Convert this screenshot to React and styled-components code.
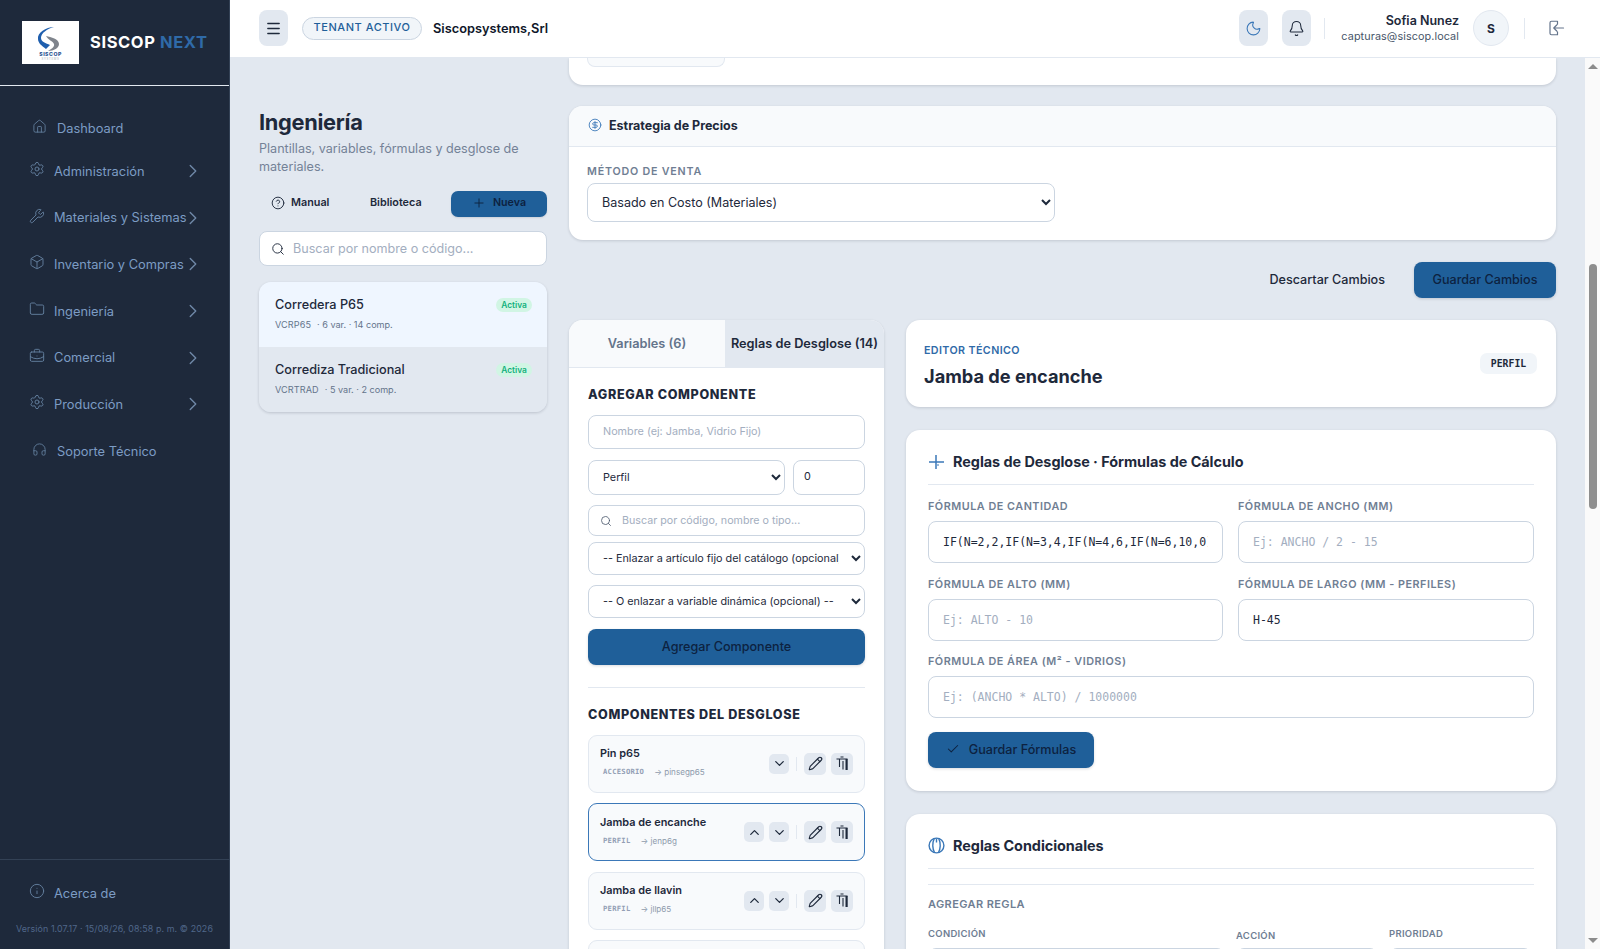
import React from 'react';
import styled, { createGlobalStyle } from 'styled-components';
import { Home, Settings, Wrench, Box, Folder, BriefcaseBusiness, Headphones, Info, ChevronRight, ChevronUp, ChevronDown, Menu, Moon, Bell, CircleHelp, Plus, Search, CircleDollarSign, Check, Pencil } from 'lucide-react';

const Global = createGlobalStyle`
  html, body { margin: 0; height: 100%; overflow: hidden; }
  body { font-family: Inter, "Liberation Sans", sans-serif; color: #1e293b; }
  * { box-sizing: border-box; }
  input::placeholder { color: #a3aec0; opacity: 1; }
`;
const mono = `"DejaVu Sans Mono", "Liberation Mono", monospace`;
const Shell = styled.div`display: flex; height: 100vh; background: #e2e8f0;`;

const Sidebar = styled.aside`
  width: 230px; flex: none; display: flex; flex-direction: column; background: #1e293b; border-right: 1px solid #334155;
`;
const Brand = styled.div`
  height: 86px; display: flex; align-items: flex-start; gap: 11px; padding: 21px 0 0 22px; border-bottom: 1px solid #e2e8f0;
`;
const LogoBox = styled.div`width: 57px; height: 43px; background: #fff; display: flex;`;
const BrandName = styled.div`
  font-size: 16.5px; font-weight: 700; letter-spacing: .6px; color: #fff; margin-top: 11px; white-space: nowrap;
  span { color: #2f6aa8; }
`;
const Nav = styled.nav`flex: 1; padding-top: 22px; display: flex; flex-direction: column;`;
const NavRow = styled.div`
  height: ${p => p.$plain ? (p.$h || 40) : 46.6}px; flex: none; display: flex; align-items: center;
  padding-left: ${p => p.$plain ? 32 : 29}px; padding-right: 25px; gap: ${p => p.$plain ? 10 : 9}px;
  font-size: 12.85px; color: #7c9cc4; white-space: nowrap;
  > svg:first-child { color: #64809f; margin-bottom: 4px; flex: none; }
  > span { flex: 1; }
`;
const NavChevron = styled(ChevronRight)`color: #7088a8; flex: none; margin-left: -20px;`;
const SideFoot = styled.div`height: 90px; border-top: 1px solid #334155; padding-top: 10px;`;
const Version = styled.div`font-size: 8.9px; color: #50678a; text-align: center; margin-top: 6px; white-space: nowrap; letter-spacing: .1px;`;

const Main = styled.div`flex: 1; min-width: 0; display: flex; flex-direction: column;`;
const TopBar = styled.header`
  height: 58px; flex: none; background: #fff; border-bottom: 1px solid #e2e8f0; display: flex; align-items: center; padding: 0 35px 1px 29px;
`;
const IconButton = styled.button`
  width: 29px; height: 36px; border: 0; border-radius: 8px; background: #e2e8f0; padding: 0; display: flex; align-items: center; justify-content: center; flex: none;
  color: ${p => p.$color || '#1e293b'}; margin-left: ${p => p.$ml || 0}px;
`;
const TenantPill = styled.div`
  margin-left: 14px; height: 23px; width: 120px; border: 1px solid #cbd5e1; background: #f1f5f9; border-radius: 12px; font-size: 11px; letter-spacing: .55px; padding-bottom: 2px;
  color: #1f5f99; display: flex; align-items: center; justify-content: center; font-weight: 500; white-space: nowrap;
`;
const TenantName = styled.div`margin-left: 11px; font-size: 12.8px; font-weight: 600; color: #0f172a; flex: 1;`;
const TopDivider = styled.div`width: 1px; height: 21px; background: #e2e8f0; margin: 0 ${p => p.$r || 0}px 0 ${p => p.$l || 0}px;`;
const UserBlock = styled.div`text-align: right; margin-right: 14px;`;
const UserName = styled.div`font-size: 12.5px; font-weight: 600; color: #1e293b; line-height: 16px;`;
const UserMail = styled.div`font-size: 10.8px; color: #475569; line-height: 15px; letter-spacing: .1px;`;
const Avatar = styled.div`
  width: 36px; height: 36px; border-radius: 50%; background: #f1f5f9; border: 1px solid #e2e8f0; display: flex; align-items: center; justify-content: center; font-size: 12px; font-weight: 700;
`;

const Body = styled.div`flex: 1; min-height: 0; display: flex;`;
const Viewport = styled.div`flex: 1; min-width: 0; overflow: hidden; display: flex; gap: 22px; padding: 0 29px;`;
const Scrollbar = styled.div`width: 15px; flex: none; background: #fafafa; display: flex; flex-direction: column; align-items: center; padding-top: 6px;`;
const ArrowUp = styled.i`width: 0; height: 0; border: 5px solid transparent; border-top: 0; border-bottom: 5px solid #8c8c8c;`;
const ArrowDown = styled.i`width: 0; height: 0; border: 5px solid transparent; border-bottom: 0; border-top: 5px solid #8c8c8c; margin-top: auto; margin-bottom: 6px;`;
const Thumb = styled.div`width: 8px; height: 245px; background: #8e8e8e; border-radius: 4px; margin-top: 195px;`;

const LeftCol = styled.div`width: 288px; flex: none; padding-top: 49px;`;
const PageTitle = styled.h1`margin: 0; font-size: 21.8px; line-height: 30px; font-weight: 700; color: #1e293b; letter-spacing: -.3px;`;
const PageSub = styled.p`margin: 3px 0 0; font-size: 12.6px; line-height: 18px; color: #748297;`;
const ActionRow = styled.div`display: flex; align-items: center; margin-top: 15px; height: 26px; font-size: 10.8px; font-weight: 600; color: #1e293b;`;
const GhostAction = styled.div`display: flex; align-items: center; gap: 6px; width: ${p => p.$w}px; padding-left: ${p => p.$pl}px; padding-bottom: 3px;`;
const NewButton = styled.button`
  margin-left: auto; width: 96px; height: 26px; border: 0; border-radius: 7px; background: #1f5f99; color: #0d2240; font: 600 10.7px Inter, sans-serif; display: flex; align-items: center; justify-content: center; gap: 7px; box-shadow: 0 1px 2px rgba(0,0,0,.1); padding: 0 0 3px;
`;
const SearchBox = styled.div`
  margin-top: 14px; height: 35px; background: #fff; border: 1px solid #cbd5e1; border-radius: 8px; display: flex; align-items: center; gap: 8px; padding-left: 11px; color: #1e293b;
  input { border: 0; outline: 0; flex: 1; min-width: 0; font: 12.6px Inter, sans-serif; background: transparent; padding: 0; }
`;
const ListCard = styled.div`margin-top: 16px; border-radius: 12px; overflow: hidden; box-shadow: 0 1px 3px rgba(15,23,42,.18);`;
const ListItem = styled.div`height: 65px; padding: 15px 15px 0 16px; background: ${p => p.$active ? '#eff6ff' : '#e2e8f0'};`;
const ListTop = styled.div`display: flex; justify-content: space-between; align-items: center; font-size: 12.7px; font-weight: 500; color: #1e293b; line-height: 16px;`;
const ActivePill = styled.span`height: 14px; width: 36px; border-radius: 7px; background: #d1f5e4; color: #12b17c; font-size: 8.4px; font-weight: 600; display: flex; align-items: center; justify-content: center;`;
const ListMeta = styled.div`margin-top: 5px; font-size: 9.1px; color: #64748b; line-height: 13px; span { margin-right: 6px; letter-spacing: .1px; }`;

const RightCol = styled.div`width: 987px; flex: none; display: flex; flex-direction: column;`;
const Card = styled.section`background: #fff; border-radius: 14px; box-shadow: 0 1px 3px rgba(15,23,42,.15);`;
const TailCard = styled(Card)`height: 27px; border-radius: 0 0 14px 14px; flex: none; padding-left: 18px;`;
const TailField = styled.div`width: 138px; height: 9px; background: #f8fafc; border: 1px solid #e2e8f0; border-top: 0; border-radius: 0 0 8px 8px;`;
const PriceCard = styled(Card)`margin-top: 21px; flex: none; overflow: hidden;`;
const PriceHead = styled.div`height: 41px; background: #f8fafc; border-bottom: 1px solid #e2e8f0; display: flex; align-items: center; gap: 7px; padding: 0 19px 2px; font-size: 12.5px; font-weight: 700; color: #1e293b; svg { color: #3b78b8; }`;
const PriceBody = styled.div`padding: 18px 18px 18px;`;
const SmallLabel = styled.div`font-size: 10.7px; font-weight: 600; letter-spacing: .8px; color: #6f7e93; line-height: 13px; margin-bottom: 5px; white-space: nowrap;`;
const NativeSelect = styled.select`
  display: block; width: ${p => p.$w || '100%'}; height: ${p => p.$h || 33}px; border: 1px solid #cbd5e1; border-radius: 8px; background: #fff; color: #1e293b;
  font: ${p => p.$fs || 10.8}px Inter, sans-serif; padding: 0 ${p => p.$pr || 0}px 0 ${p => p.$pl || 10}px; margin-top: ${p => p.$mt || 0}px; outline: 0; min-width: 0;
`;
const SaveRow = styled.div`flex: none; margin-top: 22px; height: 36px; display: flex; align-items: center; justify-content: flex-end; gap: 29px; font-size: 12.6px; font-weight: 500; color: #1e293b;`;
const DiscardText = styled.span`margin-bottom: 2px;`;
const PrimaryButton = styled.button`
  width: ${p => p.$w || '100%'}; height: 36px; border: 0; border-radius: 8px; background: #1f5f99; color: #0d2240; font: 500 12.6px Inter, sans-serif; display: flex; align-items: center; justify-content: center; gap: 9px; box-shadow: 0 1px 3px rgba(15,23,42,.15); flex: none; margin-top: ${p => p.$mt || 0}px; padding: 0 0 1px;
`;
const Columns = styled.div`flex: 1; min-height: 0; margin-top: 22px; display: flex; gap: 22px; align-items: flex-start;`;
const TabCard = styled(Card)`width: 315px; flex: none; overflow: hidden; padding-bottom: 60px;`;
const Tabs = styled.div`height: 48px; display: grid; grid-template-columns: 156px 1fr; border-bottom: 1px solid #e2e8f0; font-size: 12.75px; font-weight: 600;`;
const Tab = styled.div`display: flex; align-items: center; justify-content: center; white-space: nowrap; background: ${p => p.$on ? '#e2e8f0' : '#f8fafc'}; color: ${p => p.$on ? '#1e293b' : '#64748b'};`;
const TabBody = styled.div`padding: 19px 19px 0 19px;`;
const SectionHead = styled.h3`margin: ${p => p.$mt || 0}px 0 0; font-size: 12.6px; line-height: 16px; font-weight: 800; letter-spacing: .65px; color: #1e293b; white-space: nowrap;`;
const TextField = styled.input`
  display: block; width: ${p => p.$w || '100%'}; height: ${p => p.$h || 34}px; border: 1px solid #cbd5e1; border-radius: 8px; padding: 0 0 2px ${p => p.$pl || 14}px; font: 10.8px Inter, sans-serif; color: #1e293b; background: #fff; outline: 0; margin-top: ${p => p.$mt || 0}px;
`;
const TypeRow = styled.div`margin-top: 11px; display: flex; gap: 8px;`;
const CatSearch = styled.div`
  margin-top: 10px; height: 31px; border: 1px solid #cbd5e1; border-radius: 8px; display: flex; align-items: center; gap: 10px; padding-left: 11px; color: #475569;
  input { border: 0; outline: 0; padding: 0; flex: 1; min-width: 0; font: 10.7px Inter, sans-serif; background: transparent; }
`;
const Rule = styled.hr`border: 0; border-top: 1px solid #e2e8f0; margin: ${p => p.$m || '22px 0 0'};`;
const CompItem = styled.div`
  height: 58px; margin-top: 10.5px; border-radius: 9px; background: #f8fafc; border: 1px solid ${p => p.$on ? '#3b78b8' : '#e2e8f0'}; display: flex; align-items: center; padding: 0 11px;
  h3 + & { margin-top: 11.5px; }
`;
const CompText = styled.div`flex: 1; min-width: 0;`;
const CompName = styled.div`font-size: 10.9px; font-weight: 600; color: #1e293b; line-height: 14px; margin-top: -3px;`;
const CompMeta = styled.div`margin-top: 6px; display: flex; align-items: center; padding-left: 3px; font-size: 8.1px; color: #8e9aac; line-height: 12px;`;
const CompType = styled.span`font-family: ${mono}; font-size: 7.2px; font-weight: 700; letter-spacing: .25px; color: #939fb5; margin-right: 10px;`;
const MoveBtn = styled.div`width: 20px; height: 20px; border-radius: 5px; background: #e2e8f0; display: flex; align-items: center; justify-content: center; color: #1e293b; margin-left: ${p => p.$ml || 5}px;`;
const MiniSep = styled.div`width: 1px; height: 14px; background: #e2e8f0; margin: 0 7px;`;
const ToolBtn = styled.div`width: 22px; height: 22px; border-radius: 5px; background: #e2e8f0; display: flex; align-items: center; justify-content: center; color: #1e293b; margin-left: ${p => p.$ml || 0}px;`;

const EditorCol = styled.div`flex: 1; min-width: 0; display: flex; flex-direction: column; gap: 23px;`;
const EditorHead = styled(Card)`height: 87px; flex: none; padding: 23px 19px 0 18px; display: flex; justify-content: space-between; align-items: flex-start;`;
const Eyebrow = styled.div`font-size: 10.7px; font-weight: 600; letter-spacing: .4px; color: #2f6aa8; line-height: 14px; margin-top: 1px;`;
const EditorTitle = styled.div`font-size: 18.2px; font-weight: 700; color: #1e293b; line-height: 24px; margin-top: 6px;`;
const CodePill = styled.div`width: 57px; height: 21px; border-radius: 7px; background: #f1f5f9; font: 600 9.8px ${mono}; color: #1e293b; display: flex; align-items: center; justify-content: center; margin-top: 10px;`;
const RuleCard = styled(Card)`flex: none; padding: 21px 22px ${p => p.$pb || 22}px; height: ${p => p.$ht ? p.$ht + 'px' : 'auto'};`;
const RuleHead = styled.div`display: flex; align-items: center; gap: 8px; height: 22px; font-size: 14.45px; font-weight: 700; color: #1e293b; letter-spacing: -.05px; padding-bottom: 1px;`;
const FormulaGrid = styled.div`display: grid; grid-template-columns: 295px 296px; gap: 0 15px; margin-top: 15px;`;
const FormulaField = styled.div`grid-column: ${p => p.$full ? '1 / -1' : 'auto'}; margin-bottom: ${p => p.$full ? 13.5 : 14.5}px;`;
const FormulaLabel = styled(SmallLabel)`margin-bottom: 7px; font-size: 10.8px; letter-spacing: .52px; line-height: 14px;`;
const CodeInput = styled.input`
  display: block; width: 100%; height: 42px; border: 1px solid #cbd5e1; border-radius: 8px; padding: 0 14px; font: 11.5px ${mono}; color: #1e293b; background: #fff; outline: 0;
`;
const ToolHeading = styled(SmallLabel)`margin: 13px 0 0; font-size: 11px; letter-spacing: .4px;`;
const CondGrid = styled.div`display: grid; grid-template-columns: 297px 142px 143px; gap: 11px; align-items: start; margin-top: 16px;`;
const CondCell = styled.div`margin-top: ${p => p.$mt || 0}px;`;
const CondLabel = styled(SmallLabel)`font-size: 9.5px; letter-spacing: .3px; margin-bottom: ${p => p.$mb}px;`;
const CondInput = styled.div`height: 34px; border: 1px solid #cbd5e1; border-radius: 8px; background: #fff;`;

const LogoMark = () => (
  <svg width="57" height="43" viewBox="0 0 57 43" aria-hidden="true">
    <path d="M32 6 C25 8 19 12 19 17 C19 21 24 22 28 24 L24 28 C20 25 16 22 16 18 C15 12 24 6 32 6Z" fill="#1f5fae" />
    <path d="M24 15 C29 16 37 18 37 23 C37 27 32 30 26 30 C29 28 33 26 32 23 C31 20 26 19 24 15Z" fill="#7f848c" />
    <text x="28.5" y="35" textAnchor="middle" fontFamily="Inter, sans-serif" fontWeight="800" fontSize="5.2" letterSpacing=".5" fill="#1f4f8f">SISCOP</text>
    <text x="28.5" y="39" textAnchor="middle" fontFamily="Inter, sans-serif" fontSize="2.8" letterSpacing=".7" fill="#a7adb6">SYSTEMS</text>
  </svg>
);
const DoorIcon = () => (
  <svg width="18" height="18" viewBox="0 0 24 24" fill="none" stroke="#64748b" strokeWidth="1.6" strokeLinecap="round" strokeLinejoin="round" aria-hidden="true">
    <path d="M14 3H6a2 2 0 0 0-2 2v14a2 2 0 0 0 2 2h8M14 3v4M14 21v-4" />
    <path d="M22 12H9M13 8l-4 4 4 4" />
  </svg>
);
const ClippedTrash = () => (
  <svg width="15" height="15" viewBox="0 0 15 15" fill="none" stroke="currentColor" strokeWidth="1.1" aria-hidden="true">
    <path d="M1.5 3h11M5.5 1h3M4.5 3v8M8 5v8.5" />
    <path d="M11.6 3v11" strokeWidth="2.2" />
  </svg>
);
const CrossIcon = () => (
  <svg width="17" height="16" viewBox="0 0 17 16" fill="none" stroke="#3b78b8" strokeWidth="1.5" aria-hidden="true">
    <path d="M1 8h15M8 1v14" /><path d="M10 10v2" strokeWidth="1" />
  </svg>
);
const RingIcon = () => (
  <svg width="17" height="17" viewBox="0 0 17 17" fill="none" stroke="#3b78b8" strokeWidth="1.4" aria-hidden="true">
    <circle cx="8.5" cy="8.5" r="7.4" />
    <path d="M6.3 1.5C4 6 4.5 12 6.5 15.5M10.7 1.5C13 6 12.5 12 10.5 15.5" />
    <path d="M8.5 1.5v4" />
  </svg>
);

const navItems = [
  [Settings, 'Administración'], [Wrench, 'Materiales y Sistemas'], [Box, 'Inventario y Compras'],
  [Folder, 'Ingeniería'], [BriefcaseBusiness, 'Comercial'], [Settings, 'Producción'],
];
const components = [
  { name: 'Pin p65', type: 'ACCESORIO', code: '→ pinsegp65', up: false },
  { name: 'Jamba de encanche', type: 'PERFIL', code: '→ jenp6g', up: true, on: true },
  { name: 'Jamba de llavin', type: 'PERFIL', code: '→ jllp65', up: true },
];

export default function App() {
  return (
    <Shell>
      <Global />
      <Sidebar>
        <Brand>
          <LogoBox><LogoMark /></LogoBox>
          <BrandName>SISCOP <span>NEXT</span></BrandName>
        </Brand>
        <Nav>
          <NavRow $plain><Home size={15} strokeWidth={1.4} /><span>Dashboard</span></NavRow>
          {navItems.map(([I, t]) => (
            <NavRow key={t}><I size={16} strokeWidth={1.4} /><span>{t}</span><NavChevron size={22} strokeWidth={1.5} /></NavRow>
          ))}
          <NavRow $plain $h={47}><Headphones size={15} strokeWidth={1.4} /><span>Soporte Técnico</span></NavRow>
        </Nav>
        <SideFoot>
          <NavRow><Info size={16} strokeWidth={1.4} /><span>Acerca de</span></NavRow>
          <Version>Versión 1.07.17 · 15/08/26, 08:58 p. m. © 2026</Version>
        </SideFoot>
      </Sidebar>
      <Main>
        <TopBar>
          <IconButton><Menu size={17} strokeWidth={2} /></IconButton>
          <TenantPill>TENANT ACTIVO</TenantPill>
          <TenantName>Siscopsystems,Srl</TenantName>
          <IconButton $color="#3b78b8"><Moon size={17} strokeWidth={1.5} /></IconButton>
          <IconButton $ml={14}><Bell size={17} strokeWidth={1.5} /></IconButton>
          <TopDivider $l={13} $r={16} />
          <UserBlock>
            <UserName>Sofia Nunez</UserName>
            <UserMail>capturas@siscop.local</UserMail>
          </UserBlock>
          <Avatar>S</Avatar>
          <TopDivider $l={15} $r={22} />
          <DoorIcon />
        </TopBar>
        <Body>
          <Viewport>
            <LeftCol>
              <PageTitle>Ingeniería</PageTitle>
              <PageSub>Plantillas, variables, fórmulas y desglose de materiales.</PageSub>
              <ActionRow>
                <GhostAction $w={111} $pl={12}><CircleHelp size={14} strokeWidth={1.6} />Manual</GhostAction>
                <GhostAction $w={60} $pl={0}>Biblioteca</GhostAction>
                <NewButton><Plus size={14} strokeWidth={1.6} />Nueva</NewButton>
              </ActionRow>
              <SearchBox>
                <Search size={14} strokeWidth={1.6} />
                <input placeholder="Buscar por nombre o código..." />
              </SearchBox>
              <ListCard>
                <ListItem $active>
                  <ListTop>Corredera P65<ActivePill>Activa</ActivePill></ListTop>
                  <ListMeta><span>VCRP65</span>· 6 var. · 14 comp.</ListMeta>
                </ListItem>
                <ListItem>
                  <ListTop>Corrediza Tradicional<ActivePill>Activa</ActivePill></ListTop>
                  <ListMeta><span>VCRTRAD</span>· 5 var. · 2 comp.</ListMeta>
                </ListItem>
              </ListCard>
            </LeftCol>
            <RightCol>
              <TailCard><TailField /></TailCard>
              <PriceCard>
                <PriceHead><CircleDollarSign size={14} strokeWidth={1.5} />Estrategia de Precios</PriceHead>
                <PriceBody>
                  <SmallLabel>MÉTODO DE VENTA</SmallLabel>
                  <NativeSelect $w="468px" $h={39} $fs={12.55} $pl={10}><option>Basado en Costo (Materiales)</option></NativeSelect>
                </PriceBody>
              </PriceCard>
              <SaveRow>
                <DiscardText>Descartar Cambios</DiscardText>
                <PrimaryButton $w="142px">Guardar Cambios</PrimaryButton>
              </SaveRow>
              <Columns>
                <TabCard>
                  <Tabs>
                    <Tab>Variables (6)</Tab>
                    <Tab $on>Reglas de Desglose (14)</Tab>
                  </Tabs>
                  <TabBody>
                    <SectionHead>AGREGAR COMPONENTE</SectionHead>
                    <TextField $mt={12} placeholder="Nombre (ej: Jamba, Vidrio Fijo)" />
                    <TypeRow>
                      <NativeSelect $w="197px" $h={35} $pl={10}><option>Perfil</option></NativeSelect>
                      <TextField $w="72px" $h={35} $pl={10} defaultValue="0" />
                    </TypeRow>
                    <CatSearch>
                      <Search size={12} strokeWidth={1.6} />
                      <input placeholder="Buscar por código, nombre o tipo..." />
                    </CatSearch>
                    <NativeSelect $mt={6} $pl={10} $pr={9}><option>-- Enlazar a artículo fijo del catálogo (opcional) --</option></NativeSelect>
                    <NativeSelect $mt={10} $pl={10} $pr={9}><option>-- O enlazar a variable dinámica (opcional) --</option></NativeSelect>
                    <PrimaryButton $mt={11}>Agregar Componente</PrimaryButton>
                    <Rule />
                    <SectionHead $mt={19}>COMPONENTES DEL DESGLOSE</SectionHead>
                    {components.map(c => (
                      <CompItem key={c.name} $on={c.on}>
                        <CompText>
                          <CompName>{c.name}</CompName>
                          <CompMeta><CompType>{c.type}</CompType>{c.code}</CompMeta>
                        </CompText>
                        {c.up && <MoveBtn $ml={1}><ChevronUp size={15} strokeWidth={2} /></MoveBtn>}
                        <MoveBtn><ChevronDown size={15} strokeWidth={2} /></MoveBtn>
                        <MiniSep />
                        <ToolBtn><Pencil size={15} strokeWidth={1.8} /></ToolBtn>
                        <ToolBtn $ml={5}><ClippedTrash /></ToolBtn>
                      </CompItem>
                    ))}
                    <CompItem />
                  </TabBody>
                </TabCard>
                <EditorCol>
                  <EditorHead>
                    <div>
                      <Eyebrow>EDITOR TÉCNICO</Eyebrow>
                      <EditorTitle>Jamba de encanche</EditorTitle>
                    </div>
                    <CodePill>PERFIL</CodePill>
                  </EditorHead>
                  <RuleCard $ht={361}>
                    <RuleHead><CrossIcon />Reglas de Desglose · Fórmulas de Cálculo</RuleHead>
                    <Rule $m="11px 0 0" />
                    <FormulaGrid>
                      <FormulaField>
                        <FormulaLabel>FÓRMULA DE CANTIDAD</FormulaLabel>
                        <CodeInput defaultValue="IF(N=2,2,IF(N=3,4,IF(N=4,6,IF(N=6,10,0))))" />
                      </FormulaField>
                      <FormulaField>
                        <FormulaLabel>FÓRMULA DE ANCHO (MM)</FormulaLabel>
                        <CodeInput placeholder="Ej: ANCHO / 2 - 15" />
                      </FormulaField>
                      <FormulaField>
                        <FormulaLabel>FÓRMULA DE ALTO (MM)</FormulaLabel>
                        <CodeInput placeholder="Ej: ALTO - 10" />
                      </FormulaField>
                      <FormulaField>
                        <FormulaLabel>FÓRMULA DE LARGO (MM - PERFILES)</FormulaLabel>
                        <CodeInput defaultValue="H-45" />
                      </FormulaField>
                      <FormulaField $full>
                        <FormulaLabel>FÓRMULA DE ÁREA (M² - VIDRIOS)</FormulaLabel>
                        <CodeInput placeholder="Ej: (ANCHO * ALTO) / 1000000" />
                      </FormulaField>
                    </FormulaGrid>
                    <PrimaryButton $w="166px"><Check size={14} strokeWidth={1.8} />Guardar Fórmulas</PrimaryButton>
                  </RuleCard>
                  <RuleCard $pb={60}>
                    <RuleHead><RingIcon />Reglas Condicionales</RuleHead>
                    <Rule $m="11px 0 0" />
                    <Rule $m="15px 0 0" />
                    <ToolHeading>AGREGAR REGLA</ToolHeading>
                    <CondGrid>
                      <CondCell><CondLabel $mb={8}>CONDICIÓN</CondLabel><CondInput /></CondCell>
                      <CondCell $mt={2}><CondLabel $mb={6}>ACCIÓN</CondLabel><CondInput /></CondCell>
                      <CondCell><CondLabel $mb={8}>PRIORIDAD</CondLabel><CondInput /></CondCell>
                    </CondGrid>
                  </RuleCard>
                </EditorCol>
              </Columns>
            </RightCol>
          </Viewport>
          <Scrollbar>
            <ArrowUp />
            <Thumb />
            <ArrowDown />
          </Scrollbar>
        </Body>
      </Main>
    </Shell>
  );
}
